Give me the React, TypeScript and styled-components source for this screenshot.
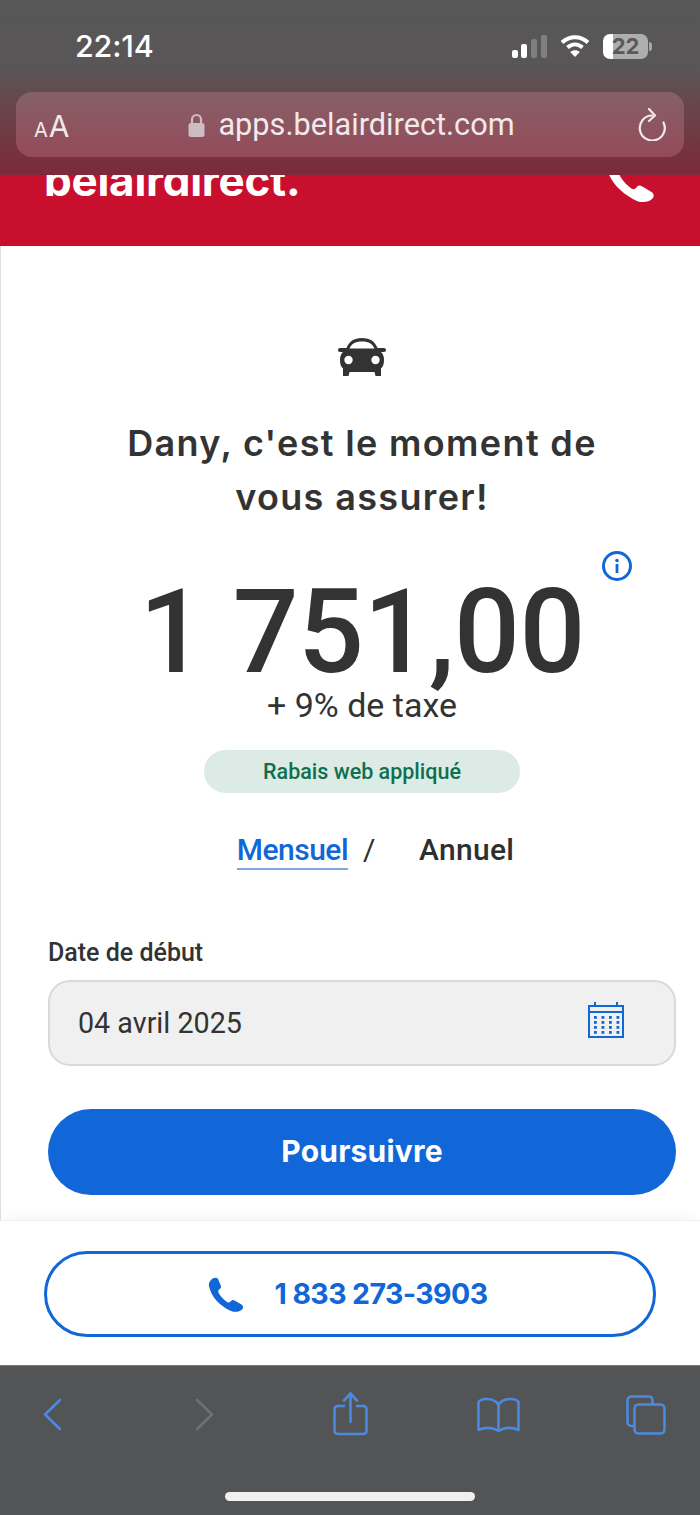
import React from 'react';
import styled, { createGlobalStyle } from 'styled-components';

const GlobalStyle = createGlobalStyle`
  html, body { margin: 0; padding: 0; background: #fff; }
  * { box-sizing: border-box; }
  body { font-family: Roboto, "Liberation Sans", sans-serif; }
`;

const Page = styled.div`
  width: 700px;
  height: 1515px;
  display: flex;
  flex-direction: column;
  overflow: hidden;
  background: #fff;
`;

const BrowserTop = styled.header`
  height: 175px;
  flex: none;
  padding: 0 16px;
  display: flex;
  flex-direction: column;
  background: linear-gradient(180deg, #575757 0%, #595657 38%, #6a4349 64%, #7b2a3a 100%);
`;

const StatusBar = styled.div`
  height: 92px;
  padding: 0 32px 0 59px;
  display: flex;
  align-items: center;
  justify-content: space-between;
`;

const Clock = styled.span`
  font: 500 30.5px/1 Inter, Roboto, sans-serif;
  color: #fff;
  letter-spacing: -0.2px;
  margin-top: 1px;
`;

const StatusIcons = styled.div`
  display: flex;
  align-items: center;
  gap: 13px;
`;

const BatteryWrap = styled.div`
  display: flex;
  align-items: center;
  gap: 1px;
`;

const Battery = styled.div`
  width: 45px;
  height: 25px;
  border-radius: 7px;
  display: flex;
  align-items: center;
  justify-content: center;
  background: linear-gradient(90deg, #fff 0 22%, #aeaeae 22% 100%);
  font: 700 22px/1 Inter, Roboto, sans-serif;
  color: #595959;
`;

const BatteryCap = styled.span`
  width: 3px;
  height: 9px;
  border-radius: 0 3px 3px 0;
  background: #a8a8a8;
`;

const UrlBar = styled.div`
  height: 65px;
  border-radius: 16px;
  padding: 0 18px;
  display: flex;
  align-items: center;
  justify-content: space-between;
  background: linear-gradient(180deg, #856168 0%, #954a59 100%);
  color: #f0e8ea;
`;

const AaLabel = styled.span`
  width: 36px;
  margin-top: 2px;
  font: 400 30px/1 Inter, Roboto, sans-serif;
  & small { font-size: 20px; margin-right: 1px; }
`;

const UrlText = styled.span`
  display: flex;
  align-items: center;
  gap: 13px;
  margin: 2px 5px 0 0;
  font: 400 30.7px/1 Roboto, sans-serif;
  color: #f1e9eb;
`;

const RedBand = styled.div`
  height: 71px;
  flex: none;
  overflow: hidden;
  padding: 0 45px 0 44px;
  display: flex;
  justify-content: space-between;
  align-items: flex-start;
  background: #c8102e;
`;

const Logo = styled.span`
  margin-top: -19px;
  font: 700 44px/48px Inter, "Open Sans", sans-serif;
  letter-spacing: -0.25px;
  color: #fff;
`;

const BandPhone = styled.span`
  display: flex;
  margin-top: -22px;
`;

const Main = styled.main`
  flex: 1;
  padding: 92px 0 0 23px;
  border-left: 1px solid #dedede;
  display: flex;
  flex-direction: column;
  align-items: center;
`;

const Heading = styled.h1`
  margin: 40px 0 0;
  font: 600 36px/54px Inter, sans-serif;
  text-align: center;
  color: #333;
  letter-spacing: 1.35px;
`;

const PriceRow = styled.div`
  position: relative;
  margin-top: 42px;
  height: 132px;
  width: 100%;
  text-align: center;
  font: 500 116px/132px Roboto, sans-serif;
  color: #333;
  letter-spacing: -0.6px;
`;

const InfoButton = styled.span`
  position: absolute;
  top: -15px;
  right: 68px;
  display: flex;
`;

const TaxLine = styled.div`
  font: 400 34px/38px Roboto, sans-serif;
  color: #333;
  margin-top: -12px;
`;

const Badge = styled.div`
  width: 316px;
  height: 43px;
  margin-top: 26px;
  border-radius: 22px;
  display: flex;
  align-items: center;
  justify-content: center;
  background: #dcebe5;
  color: #0f7050;
  font: 500 21.5px/1 Roboto, sans-serif;
`;

const Toggle = styled.div`
  margin: 38px 0 0 27px;
  display: flex;
  align-items: flex-start;
  font: 500 30px/38px Roboto, sans-serif;
  color: #2f2f2f;
`;

const ToggleOption = styled.span<{ $active?: boolean }>`
  color: ${p => (p.$active ? '#1167d8' : '#2f2f2f')};
  border-bottom: 2px solid ${p => (p.$active ? '#7fa8e0' : 'transparent')};
  letter-spacing: ${p => (p.$active ? '-0.5px' : '0.3px')};
  line-height: 37px;
`;

const Slash = styled.span`
  width: 71px;
  padding-left: 15px;
  font-weight: 400;
`;

const Field = styled.div`
  align-self: stretch;
  margin: 68px 24px 0 24px;
`;

const FieldLabel = styled.label`
  display: block;
  font: 500 25px/30px Roboto, sans-serif;
  color: #333;
  margin-bottom: 12px;
`;

const DateInput = styled.div`
  height: 86px;
  padding: 0 50px 0 28px;
  display: flex;
  align-items: center;
  justify-content: space-between;
  border: 2px solid #d9d9d9;
  border-radius: 22px;
  background: #f0f0f0;
  font: 400 28.7px/1 Roboto, sans-serif;
  color: #333;
`;

const CalendarIcon = styled.svg`
  margin-top: -6px;
`;

const PrimaryButton = styled.button`
  align-self: stretch;
  margin: 43px 24px 0 24px;
  height: 86px;
  padding-bottom: 4px;
  border: 0;
  border-radius: 43px;
  background: #1167d8;
  color: #fff;
  font: 700 30px/1 Inter, sans-serif;
  letter-spacing: 0.2px;
`;

const CallBar = styled.div`
  height: 145px;
  flex: none;
  padding: 30px 44px 0;
  background: #fff;
  border-top: 1px solid #f0f0f0;
  box-shadow: 0 -10px 12px -6px rgba(0, 0, 0, 0.04);
`;

const CallButton = styled.div`
  height: 86px;
  padding-right: 5px;
  border: 3px solid #1167d8;
  border-radius: 43px;
  display: flex;
  align-items: center;
  justify-content: center;
  gap: 31px;
  color: #1167d8;
  font: 700 28.5px/1 Inter, sans-serif;
  letter-spacing: -0.6px;
`;

const BottomBar = styled.nav`
  height: 150px;
  flex: none;
  position: relative;
  padding: 32px 0 0 42px;
  display: flex;
  align-items: flex-start;
  background: #535455;
  border-top: 1px solid #7a7a7a;
`;

const NavIcon = styled.svg<{ $left?: number; $top?: number; $dim?: boolean }>`
  flex: none;
  margin-left: ${p => p.$left ?? 0}px;
  margin-top: ${p => p.$top ?? 0}px;
  fill: none;
  stroke: ${p => (p.$dim ? '#6f7070' : '#4a8ae0')};
  stroke-width: 2.6;
  stroke-linecap: round;
  stroke-linejoin: round;
`;

const HomeIndicator = styled.div`
  position: absolute;
  left: 225px;
  bottom: 14px;
  width: 250px;
  height: 9px;
  border-radius: 5px;
  background: #f0f0f0;
`;

const PhoneGlyph: React.FC<{ width: number; height: number; color: string }> = ({ width, height, color }) => (
  <svg width={width} height={height} viewBox="0 0 36 35" fill={color}>
    <path d="M3 3C5 .5 9 0 10 2l3 7c.5 1.500-.5 2.500-2 3.500-1 1-1 2 0 4 2 3.500 5 6.500 8 8.500 1.500 1 2.500.5 3.500-.5 1-1.500 2.500-2 4-1l7 4c2 1.500 2 3.500.5 5-2.500 2.500-7 3-11 1.500C12 29 3 20 1 9 .5 7 1.500 4.500 3 3z" />
  </svg>
);

export default function App() {
  return (
    <Page>
      <GlobalStyle />
      <BrowserTop>
        <StatusBar>
          <Clock>22:14</Clock>
          <StatusIcons>
            <svg width="35" height="23" viewBox="0 0 35 23">
              <rect x="0" y="15" width="6" height="8" rx="2" fill="#fff" />
              <rect x="9" y="9" width="6" height="14" rx="2" fill="#fff" />
              <rect x="19" y="4" width="6" height="19" rx="2" fill="#7f7f7f" />
              <rect x="29" y="0" width="6" height="23" rx="2" fill="#7f7f7f" />
            </svg>
            <svg width="30" height="24" viewBox="0 0 30 24" fill="none" stroke="#fff" strokeWidth="4">
              <path d="M2 8.500C9.500 1.500 20.500 1.500 28 8.500" />
              <path d="M7.500 13.500C12 9.500 18 9.500 22.500 13.500" />
              <path d="M15 23l-4.800-5c2.800-2.200 6.800-2.200 9.600 0z" fill="#fff" stroke="none" />
            </svg>
            <BatteryWrap>
              <Battery>22</Battery>
              <BatteryCap />
            </BatteryWrap>
          </StatusIcons>
        </StatusBar>
        <UrlBar>
          <AaLabel><small>A</small>A</AaLabel>
          <UrlText>
            <svg width="17" height="25" viewBox="0 0 17 25">
              <path d="M4 11V6.500a4.500 4.500 0 0 1 9 0V11" fill="none" stroke="#cdbcc1" strokeWidth="2.200" />
              <rect x="0.500" y="10" width="16" height="14" rx="2.500" fill="#cdbcc1" />
            </svg>
            apps.belairdirect.com
          </UrlText>
          <svg width="28" height="33" viewBox="0 0 28 33" fill="none" stroke="#f1e9eb" strokeWidth="2.200" strokeLinecap="round" strokeLinejoin="round">
            <path d="M14 7.500a12.500 12.500 0 1 0 11.500 7" />
            <path d="M11 1l6 6.500-6 5.500" />
          </svg>
        </UrlBar>
      </BrowserTop>

      <RedBand>
        <Logo>belairdirect.</Logo>
        <BandPhone>
          <PhoneGlyph width={50} height={50} color="#fff" />
        </BandPhone>
      </RedBand>

      <Main>
        <svg width="48" height="38" viewBox="0 0 48 38" fill="#333">
          <path fillRule="evenodd" d="M24 0c8 0 13 3.500 15.500 10H46c1.200 0 2 .9 2 2s-.8 2-2 2h-3c2 2 3 4.500 3 7.500 0 4-.5 7-3 9V38h-5.500l-1-4h-25l-1 4H5v-7.500c-2.500-2-3-5-3-9 0-3 1-5.500 3-7.500H2c-1.200 0-2-.9-2-2s.8-2 2-2h6.500C11 3.500 16 0 24 0zm0 3.500c-7 0-10.500 2.500-12.500 7h25c-2-4.500-5.500-7-12.500-7zM10.500 17.800a4.200 4.200 0 1 0 0 8.400 4.200 4.200 0 0 0 0-8.400zm27 0a4.200 4.200 0 1 0 0 8.400 4.200 4.200 0 0 0 0-8.400z" />
        </svg>
        <Heading>Dany, c'est le moment de<br />vous assurer!</Heading>
        <PriceRow>
          1 751,00
          <InfoButton>
            <svg width="30" height="30" viewBox="0 0 30 30">
              <circle cx="15" cy="15" r="13.500" fill="none" stroke="#1167d8" strokeWidth="3" />
              <rect x="13.600" y="13" width="2.800" height="9" fill="#1167d8" />
              <circle cx="15" cy="9.500" r="1.800" fill="#1167d8" />
            </svg>
          </InfoButton>
        </PriceRow>
        <TaxLine>+ 9% de taxe</TaxLine>
        <Badge>Rabais web appliqué</Badge>
        <Toggle>
          <ToggleOption $active>Mensuel</ToggleOption>
          <Slash>/</Slash>
          <ToggleOption>Annuel</ToggleOption>
        </Toggle>
        <Field>
          <FieldLabel>Date de début</FieldLabel>
          <DateInput>
            04 avril 2025
            <CalendarIcon width="36" height="36" viewBox="0 0 36 36">
              <path d="M7 0v5M29 0v5" stroke="#1167d8" strokeWidth="2" />
              <rect x="1" y="4" width="34" height="31" fill="none" stroke="#1167d8" strokeWidth="2" />
              <rect x="1" y="9" width="34" height="2" fill="#1167d8" />
              {[14, 19, 24, 29].map(y =>
                [6, 13.5, 21, 28.5].map(x => (
                  <rect key={`${x}-${y}`} x={x} y={y} width="2.8" height="2.8" fill="#1167d8" />
                ))
              )}
            </CalendarIcon>
          </DateInput>
        </Field>
        <PrimaryButton>Poursuivre</PrimaryButton>
      </Main>

      <CallBar>
        <CallButton>
          <PhoneGlyph width={36} height={35} color="#1167d8" />
          1 833 273-3903
        </CallButton>
      </CallBar>

      <BottomBar>
        <NavIcon width="20" height="33" viewBox="0 0 20 33">
          <path d="M18 2 3 16.500 18 31" />
        </NavIcon>
        <NavIcon $left={133} $dim width="19" height="33" viewBox="0 0 19 33">
          <path d="M2 2l15 14.500L2 31" />
        </NavIcon>
        <NavIcon $left={119} $top={-6} width="35" height="44" viewBox="0 0 35 44">
          <path d="M11 14H5c-2.200 0-3.500 1.300-3.500 3.500v21C1.500 40.700 2.800 42 5 42h25c2.200 0 3.500-1.300 3.500-3.500v-21c0-2.200-1.300-3.500-3.500-3.500h-6" />
          <path d="M17.500 30V2M11 8.500l6.500-7 6.500 7" />
        </NavIcon>
        <NavIcon $left={109} $top={-1} width="43" height="36" viewBox="0 0 43 36">
          <path d="M21.500 8C19 3 14 2 9 2 6 2 3 3 1.500 5v28c6-3 14-3 20 1 6-4 14-4 20-1V5C40 3 37 2 34 2c-5 0-10 1-12.500 6zM21.500 8v26" />
        </NavIcon>
        <NavIcon $left={106} $top={-3} width="40" height="40" viewBox="0 0 40 40">
          <path d="M7 31H5.500c-2.500 0-4-1.500-4-4V5.500c0-2.500 1.500-4 4-4h17c2.500 0 4 1.500 4 4V9" />
          <rect x="8.500" y="9.500" width="30" height="29" rx="4" />
        </NavIcon>
        <HomeIndicator />
      </BottomBar>
    </Page>
  );
}
